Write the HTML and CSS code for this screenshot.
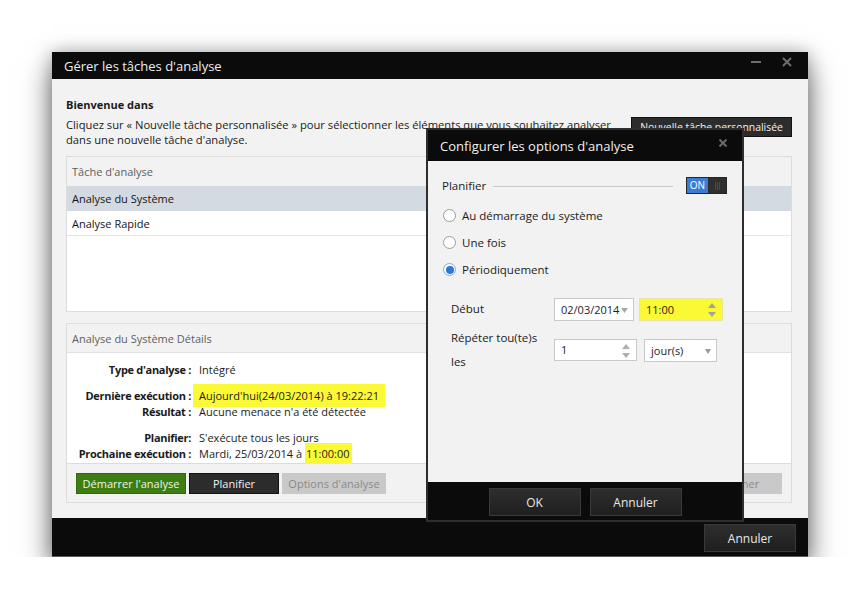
FILE: index.html
```html
<!DOCTYPE html>
<html lang="fr">
<head>
<meta charset="utf-8">
<title>Gérer les tâches d'analyse</title>
<link rel="stylesheet" href="styles.css">
</head>
<body>
<div class="stage">
  <div class="window">
    <header class="titlebar">
      <span class="title">Gérer les tâches d'analyse</span>
      <span class="controls">
        <svg class="ctl" width="10" height="10" viewBox="0 0 10 10"><rect x="0" y="4" width="10" height="2" fill="#6e6e6e"/></svg>
        <svg class="ctl" width="10" height="10" viewBox="0 0 10 10"><path d="M1 1 L9 9 M9 1 L1 9" stroke="#6e6e6e" stroke-width="2"/></svg>
      </span>
    </header>

    <main class="content">
      <h1 class="welcome">Bienvenue dans</h1>
      <div class="intro">
        <p class="intro-text">Cliquez sur « Nouvelle tâche personnalisée » pour sélectionner les éléments que vous souhaitez analyser<br>dans une nouvelle tâche d'analyse.</p>
        <button class="btn btn-dark btn-new">Nouvelle tâche personnalisée</button>
      </div>

      <section class="panel tasks">
        <div class="panel-head">Tâche d'analyse</div>
        <div class="task-row selected">Analyse du Système</div>
        <div class="task-row">Analyse Rapide</div>
      </section>

      <section class="panel details">
        <div class="panel-head">Analyse du Système Détails</div>
        <dl class="info">
          <dt>Type d'analyse :</dt><dd>Intégré</dd>
          <dt class="group">Dernière exécution :</dt><dd class="group"><span class="mark mark-wide">Aujourd'hui(24/03/2014) à 19:22:21</span></dd>
          <dt>Résultat :</dt><dd>Aucune menace n'a été détectée</dd>
          <dt class="group">Planifier:</dt><dd class="group">S'exécute tous les jours</dd>
          <dt>Prochaine exécution :</dt><dd>Mardi, 25/03/2014 à <span class="mark">11:00:00</span></dd>
        </dl>
        <div class="actions">
          <button class="btn btn-green w-start">Démarrer l'analyse</button>
          <button class="btn btn-dark w-plan">Planifier</button>
          <button class="btn btn-disabled w-opts">Options d'analyse</button>
          <button class="btn btn-disabled w-del">Supprimer</button>
        </div>
      </section>
    </main>

    <footer class="footer">
      <button class="btn btn-black">Annuler</button>
    </footer>

    <div class="dialog">
      <div class="dialog-title">
        <span>Configurer les options d'analyse</span>
        <svg class="dialog-close" width="8" height="8" viewBox="0 0 8 8"><path d="M0.5 0.5 L7.5 7.5 M7.5 0.5 L0.5 7.5" stroke="#6a6a6a" stroke-width="2"/></svg>
      </div>
      <div class="dialog-body">
        <div class="sched">
          <span>Planifier</span>
          <span class="rule"></span>
          <span class="toggle"><span class="toggle-on">ON</span><span class="toggle-off"></span></span>
        </div>
        <div class="radios">
          <label class="radio"><span class="dot"></span>Au démarrage du système</label>
          <label class="radio"><span class="dot"></span>Une fois</label>
          <label class="radio"><span class="dot checked"></span>Périodiquement</label>
        </div>
        <div class="form">
          <span class="form-label">Début</span>
          <div class="fields">
            <span class="field w-date">02/03/2014
              <svg class="arrow-down" width="7" height="5" viewBox="0 0 7 5"><path d="M0 0 H7 L3.5 5 Z" fill="#a8a8a8"/></svg>
            </span>
            <span class="field w-time hl">11:00
              <svg class="spin" width="8" height="14" viewBox="0 0 8 14"><path d="M0 5 L4 0 L8 5 Z M0 9 H8 L4 14 Z" fill="#a3a39a"/></svg>
            </span>
          </div>
          <span class="form-label">Répéter tou(te)s les</span>
          <div class="fields fields-wide">
            <span class="field w-num">1
              <svg class="spin" width="8" height="14" viewBox="0 0 8 14"><path d="M0 5 L4 0 L8 5 Z M0 9 H8 L4 14 Z" fill="#b0b0b0"/></svg>
            </span>
            <span class="field w-unit">jour(s)
              <svg class="arrow-down" width="6" height="5" viewBox="0 0 6 5"><path d="M0 0 H6 L3 5 Z" fill="#9a9a9a"/></svg>
            </span>
          </div>
        </div>
      </div>
      <div class="dialog-foot">
        <button class="btn btn-black">OK</button>
        <button class="btn btn-black">Annuler</button>
      </div>
    </div>
  </div>
</div>
</body>
</html>
```

FILE: styles.css
```css
* { box-sizing: border-box; }

html, body {
  margin: 0;
  background: #ffffff;
}

body {
  font-family: "Open Sans", "Noto Sans", sans-serif;
  font-size: 11px;
  color: #1b1b1b;
}

.stage {
  padding: 52px 0 0 52px;
}

.window {
  position: relative;
  width: 756px;
  height: 505px;
  display: flex;
  flex-direction: column;
  background: #f2f2f2;
  box-shadow: 0 14px 28px rgba(0, 0, 0, 0.55), 0 0 16px rgba(0, 0, 0, 0.25);
}

/* ---------- title bar ---------- */
.titlebar {
  height: 27px;
  flex: none;
  display: flex;
  align-items: center;
  padding: 0 16px 0 12px;
  background: #0b0b0b;
  color: #eeeeee;
  font-size: 13px;
}

.controls {
  margin-left: auto;
  align-self: flex-start;
  margin-top: 5px;
  display: flex;
  gap: 21px;
}

.ctl { display: block; }

/* ---------- content ---------- */
.content {
  flex: 1;
  padding: 18px 16px 0 14px;
}

.welcome {
  margin: 0;
  font-size: 11px;
  font-weight: 700;
  line-height: 16px;
}

.intro {
  margin-top: 4px;
  display: flex;
  justify-content: space-between;
  align-items: flex-start;
}

.intro-text {
  margin: 0;
  font-size: 11.2px;
  line-height: 15px;
}

.btn {
  font-family: inherit;
  font-size: 11px;
  border: 1px solid transparent;
  padding: 0;
  cursor: default;
}

.btn-dark {
  background: #2c2c2c;
  border-color: #121212;
  color: #f2f2f2;
}

.btn-new {
  width: 161px;
  height: 20px;
  font-size: 10.4px;
  white-space: nowrap;
}

.panel {
  border: 1px solid #dcdcdc;
  background: #ffffff;
}

.panel-head {
  height: 29px;
  line-height: 29px;
  padding-left: 5px;
  background: #f2f2f2;
  color: #5f5f5f;
}

.tasks {
  margin-top: 9px;
  height: 156px;
}

.task-row {
  height: 25px;
  line-height: 25px;
  padding-left: 5px;
  border-bottom: 1px solid #e6e6e6;
  color: #151515;
}

.task-row.selected {
  background: #d3dae1;
  border-bottom-color: #d3dae1;
}

.details {
  margin-top: 11px;
}

.details .panel-head {
  border-bottom: 1px solid #e2e2e2;
}

.info {
  margin: 0;
  padding: 9px 0 1px;
  display: grid;
  grid-template-columns: 124px 1fr;
  column-gap: 8px;
  line-height: 16px;
}

.info dt {
  text-align: right;
  font-weight: 700;
  letter-spacing: -0.3px;
  white-space: nowrap;
}

.info dd {
  margin: 0;
  white-space: nowrap;
}

.info .group {
  margin-top: 10px;
}

.mark {
  background: #fbf935;
  padding: 3px 3px 3px 1px;
}

.mark-wide {
  margin-left: -6px;
  padding: 4px 6px 4px 6px;
}

.actions {
  height: 39px;
  display: flex;
  align-items: center;
  gap: 3px;
  padding: 0 9px;
  background: #f2f2f2;
  border-top: 1px solid #dcdcdc;
}

.actions .btn { height: 21px; }

.btn-green {
  background: #3d7d14;
  border-color: #2f6a0c;
  color: #ecf5e6;
}

.btn-disabled {
  background: #c9c9c9;
  border-color: #c9c9c9;
  color: #8a8a8a;
}

.w-start { width: 110px; }
.w-plan  { width: 90px; }
.w-opts  { width: 104px; }
.w-del   { width: 100px; margin-left: auto; }

/* ---------- footer ---------- */
.footer {
  height: 39px;
  flex: none;
  display: flex;
  justify-content: flex-end;
  align-items: flex-start;
  padding: 6px 12px 0;
  background: #0b0b0b;
  border-bottom: 1px solid #5a5a5a;
}

.btn-black {
  width: 92px;
  height: 28px;
  background: linear-gradient(#2e2e2e, #1f1f1f);
  border-color: #3a3a3a;
  color: #e8e8e8;
  font-size: 12px;
}

/* ---------- dialog ---------- */
.dialog {
  position: absolute;
  left: 374px;
  top: 76px;
  width: 318px;
  height: 394px;
  display: flex;
  flex-direction: column;
  border: 2px solid #2e2e2e;
  background: #f2f2f2;
  font-size: 11.5px;
}

.dialog-title {
  height: 31px;
  flex: none;
  display: flex;
  align-items: center;
  padding: 0 15px 0 12px;
  background: #0b0b0b;
  color: #f0f0f0;
  font-size: 13px;
}

.dialog-close {
  margin-left: auto;
  align-self: flex-start;
  margin-top: 9px;
}

.dialog-body {
  flex: 1;
  padding: 16px 15px 0 14px;
}

.sched {
  display: flex;
  align-items: center;
  height: 17px;
}

.rule {
  flex: 1;
  height: 1px;
  margin: 1px 13px 0 7px;
  background: #c6c6c6;
}

.toggle {
  display: flex;
  width: 41px;
  height: 17px;
  border: 1px solid #262626;
}

.toggle-on {
  width: 21px;
  background: #3b7dd4;
  color: #ffffff;
  font-size: 10px;
  line-height: 15px;
  text-align: center;
}

.toggle-off {
  flex: 1;
  background:
    linear-gradient(90deg, transparent 7px, #4a4a4a 7px, #4a4a4a 8px, transparent 8px, transparent 9px, #4a4a4a 9px, #4a4a4a 10px, transparent 10px, transparent 11px, #4a4a4a 11px, #4a4a4a 12px, transparent 12px) center / 100% 8px no-repeat,
    #2f2f2f;
}

.radios {
  margin-top: 8px;
}

.radio {
  display: flex;
  align-items: center;
  height: 27px;
  gap: 6px;
}

.dot {
  width: 13px;
  height: 13px;
  margin-left: 1px;
  border-radius: 50%;
  border: 1px solid #9c9c9c;
  background: #ffffff;
  position: relative;
}

.dot.checked {
  border-color: #8aa9cf;
}

.dot.checked::after {
  content: "";
  position: absolute;
  left: 1.5px;
  top: 1.5px;
  width: 8px;
  height: 8px;
  border-radius: 50%;
  background: #2f78d2;
}

.form {
  margin-top: 14px;
  padding-left: 9px;
  display: grid;
  grid-template-columns: 103px auto;
  row-gap: 5px;
  align-items: center;
}

.form-label {
  line-height: 24px;
}

.fields {
  display: flex;
  gap: 5px;
}

.fields-wide { gap: 7px; }

.field {
  position: relative;
  height: 23px;
  display: flex;
  align-items: center;
  padding-left: 6px;
  background: #ffffff;
  border: 1px solid #c9c9c9;
  font-size: 11px;
  color: #1e1e1e;
}

.field.hl {
  background: #fbf935;
  border-color: #e6e6a0;
}

.w-date { width: 80px; }
.w-time { width: 84px; }
.w-num  { width: 83px; height: 22px; }
.w-unit { width: 73px; }

.arrow-down {
  position: absolute;
  right: 5px;
  top: 9px;
}

.spin {
  position: absolute;
  right: 6px;
  top: 4px;
}

.dialog-foot {
  height: 38px;
  flex: none;
  display: flex;
  justify-content: center;
  align-items: flex-start;
  gap: 9px;
  padding-top: 6px;
  background: #0b0b0b;
}
```
